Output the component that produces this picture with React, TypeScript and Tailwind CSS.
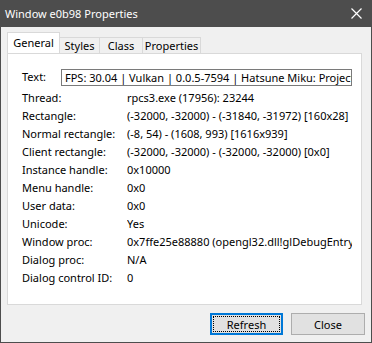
import React from "react";

const rows: [string, string][] = [
  ["Thread:", "rpcs3.exe (17956): 23244"],
  ["Rectangle:", "(-32000, -32000) - (-31840, -31972) [160x28]"],
  ["Normal rectangle:", "(-8, 54) - (1608, 993) [1616x939]"],
  ["Client rectangle:", "(-32000, -32000) - (-32000, -32000) [0x0]"],
  ["Instance handle:", "0x10000"],
  ["Menu handle:", "0x0"],
  ["User data:", "0x0"],
  ["Unicode:", "Yes"],
  ["Window proc:", "0x7ffe25e88880 (opengl32.dll!glDebugEntry+0x1234)"],
  ["Dialog proc:", "N/A"],
  ["Dialog control ID:", "0"],
];

export default function App() {
  return (
    <div
      className="w-[372px] h-[343px] bg-[#f0f0f0] border-x border-b border-[#4d4d4d] flex flex-col text-[11px] text-black"
      style={{ fontFamily: '"Noto Sans", "Open Sans", sans-serif' }}
    >
      <div className="h-[27px] bg-[#4d4d4d] flex items-center justify-between pl-[4px] pr-[9px] shrink-0">
        <span className="text-white text-[11px] leading-none">Window e0b98 Properties</span>
        <svg width="11" height="11" viewBox="0 0 11 11">
          <path d="M0.5 0.5 L10.5 10.5 M10.5 0.5 L0.5 10.5" stroke="#ffffff" strokeWidth="1.2" />
        </svg>
      </div>
      <div className="pl-[6px] pr-[9px] pt-[6px] flex flex-col">
        <div className="flex items-end h-[20px] relative z-10">
          <div className="h-[21px] w-[53px] bg-white border border-b-0 border-[#d9d9d9] flex items-center justify-center leading-none pb-[2px]">
            General
          </div>
          <div className="h-[16px] w-[40px] border border-l-0 border-b-0 border-[#d9d9d9] flex items-center justify-center leading-none">
            Styles
          </div>
          <div className="h-[16px] w-[43px] border border-l-0 border-b-0 border-[#d9d9d9] flex items-center justify-center leading-none">
            Class
          </div>
          <div className="h-[16px] w-[58px] border border-l-0 border-b-0 border-[#d9d9d9] flex items-center justify-center leading-none">
            Properties
          </div>
        </div>
        <div className="h-[252px] bg-white border border-[#d9d9d9] pl-[14px] pt-[15px]">
          <div className="flex items-center h-[17px]">
            <span className="w-[39px]">Text:</span>
            <div className="w-[291px] h-[17px] border border-[#7a7a7a] pl-[3px] overflow-hidden whitespace-nowrap leading-[15px]">
              FPS: 30.04 | Vulkan | 0.0.5-7594 | Hatsune Miku: Project DIVA Future Tone
            </div>
          </div>
          <div className="mt-[3px] flex flex-col">
            {rows.map(([k, v]) => (
              <div key={k} className="flex h-[18px] leading-[18px] whitespace-nowrap">
                <span className="w-[105px] shrink-0">{k}</span>
                <span className="w-[225px] overflow-hidden">{v}</span>
              </div>
            ))}
          </div>
        </div>
      </div>
      <div className="flex justify-end gap-[8px] pr-[6px] mt-[8px]">
        <button className="w-[73px] h-[22px] bg-[#e1e1e1] border-2 border-[#0078d7] p-[1px] flex">
          <span className="flex-1 border border-dotted border-black flex items-center justify-center leading-none">
            Refresh
          </span>
        </button>
        <button className="w-[74px] h-[22px] bg-[#e1e1e1] border border-[#adadad] flex items-center justify-center leading-none">
          Close
        </button>
      </div>
    </div>
  );
}
